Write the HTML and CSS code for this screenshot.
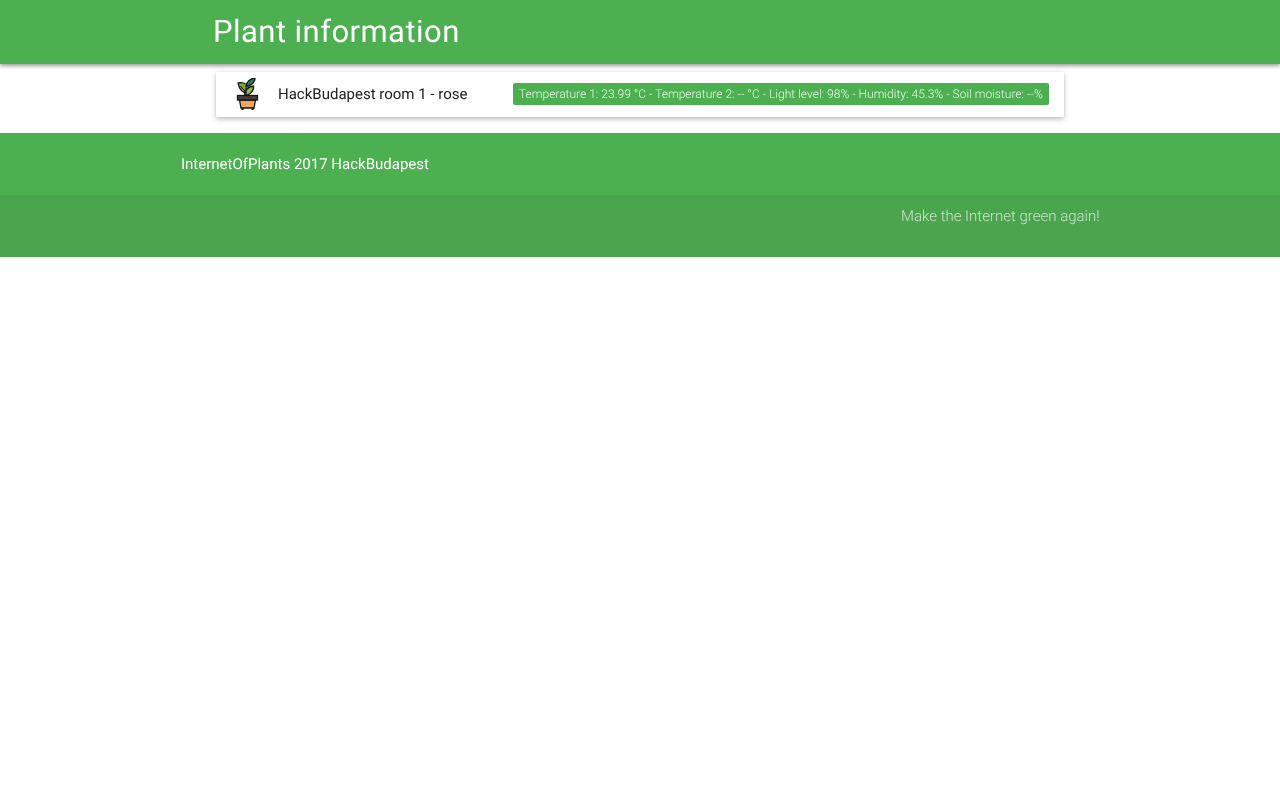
FILE: index.html
```html
<!DOCTYPE html>
<html lang="en">
<head>
<meta charset="utf-8">
<title>Plant information</title>
<link rel="stylesheet" href="styles.css">
</head>
<body>
<header class="topbar"><h1 class="title">Plant information</h1></header>
<main class="list">
  <div class="card">
    <svg class="plant" viewBox="0 0 24 34" width="24" height="34" aria-hidden="true">
      <path d="M3 5c4.500-1 9 .5 10.500 4.500.8 2.200.5 4.500 0 6-5 .5-9.500-4-10.500-10.500z" fill="#7da640" stroke="#151515" stroke-width="1.300"/>
      <path d="M11 8c.5-4 4-7.500 9-8 .3 4-3.500 8-9 8z" fill="#2f7d5c" stroke="#151515" stroke-width="1.300"/>
      <path d="M9.500 17.500c-.5-4.500 3.500-9 9-9.500.5 5-3.500 9.500-9 9.500z" fill="#8fbf3f" stroke="#151515" stroke-width="1.300"/>
      <path d="M5.500 8l6 7M11 17.500V9" stroke="#151515" stroke-width="1" fill="none"/>
      <path d="M4.500 22h16l-1.500 8H6z" fill="#f2a65e" stroke="#151515" stroke-width="1.300"/>
      <rect x="2.500" y="17.500" width="20" height="4.500" fill="#4c3a36" stroke="#151515" stroke-width="1.300"/>
      <path d="M7.500 30v2M17.500 30v2" stroke="#151515" stroke-width="2" fill="none"/>
    </svg>
    <span class="name">HackBudapest room 1 - rose</span>
    <span class="badge"><span class="badge-text">Temperature 1: 23.99 °C - Temperature 2: -- °C - Light level: 98% - Humidity: 45.3% - Soil moisture: --%</span></span>
  </div>
</main>
<footer class="footer">
  <div class="footer-top"><span class="footer-brand">InternetOfPlants 2017 HackBudapest</span></div>
  <div class="footer-bottom"><span class="footer-slogan">Make the Internet green again!</span></div>
</footer>
</body>
</html>
```
FILE: styles.css
```css
* { box-sizing: border-box; }
html, body { margin: 0; background: #fff; }
body { font-family: Roboto, sans-serif; color: #212121; text-rendering: geometricPrecision; }
.topbar {
  height: 64px;
  background: #4caf50;
  padding-left: 213px;
  display: flex;
  align-items: center;
  box-shadow: 0 2px 4px rgba(0,0,0,.4);
}
.title { margin: 0 0 2px; font-size: 31px; font-weight: 400; letter-spacing: .45px; color: #fff; will-change: transform; }
.list { padding: 8px 216px 16px; }
.card {
  height: 45px;
  background: #fff;
  display: flex;
  align-items: center;
  padding: 0 15px 0 19px;
  box-shadow: 0 2px 5px rgba(0,0,0,.26), 0 0 3px rgba(0,0,0,.06);
}
.plant { flex: none; margin-right: 19px; filter: blur(.3px); }
.name { font-size: 15px; flex: 1; line-height: 18px; margin-bottom: 2px; will-change: transform; }
.badge {
  background: #4caf50;
  color: rgba(255,255,255,.9);
  font-size: 12px;
  font-weight: 300;
  letter-spacing: .01px;
  line-height: 22px;
  padding: 0 6px;
  border-radius: 2px;
  white-space: nowrap;
  margin-bottom: 2px;
}
.badge-text { display: block; will-change: transform; }
.footer-top { height: 62px; background: #4caf50; display: flex; align-items: center; padding-left: 181px; }
.footer-brand { color: #fff; font-size: 15px; will-change: transform; }
.footer-bottom { height: 62px; background: #4aa54e; display: flex; justify-content: flex-end; padding: 12px 180px 0 0; }
.footer-slogan { color: #fff; opacity: .7; font-size: 15px; font-weight: 300; line-height: 18px; will-change: transform; }
```
